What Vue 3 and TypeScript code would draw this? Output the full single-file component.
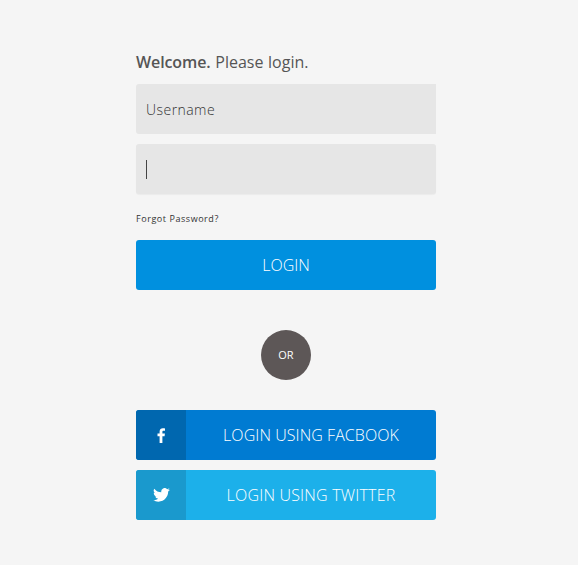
<script setup lang="ts">
const title = 'Please login.'
</script>

<template>
  <div class="page">
    <form class="form" @submit.prevent>
      <h1 class="title"><b>Welcome.</b> <span>Please</span> <em>login.</em></h1>
      <div class="field"><span class="placeholder">Username</span></div>
      <div class="field second"><span class="caret"></span></div>
      <a class="forgot">Forgot Password?</a>
      <button class="btn login" type="submit">LOGIN</button>
      <div class="or">OR</div>
      <button class="btn social fb" type="button">
        <span class="ico">
          <svg width="9" height="15" viewBox="0 0 9 15"><path fill="#fff" d="M2.6 15V8.2H.5V5.6h2.1V3.700C2.600 1.400 3.900.3 5.900.3c.9 0 1.700.1 2.100.1v2.400H6.700c-1.100 0-1.300.5-1.300 1.300v1.500h2.500l-.3 2.600H5.400V15z"/></svg>
        </span>
        <span class="lbl">LOGIN USING FACBOOK</span>
      </button>
      <button class="btn social tw" type="button">
        <span class="ico">
          <svg width="17" height="14" viewBox="0 0 24 20"><path fill="#fff" d="M24 2.400a9.800 9.800 0 0 1-2.800.8A4.900 4.900 0 0 0 23.300.5a9.800 9.800 0 0 1-3.100 1.200 4.900 4.900 0 0 0-8.400 4.500A14 14 0 0 1 1.700.9a4.900 4.900 0 0 0 1.500 6.600 4.900 4.900 0 0 1-2.200-.6v.1a4.900 4.900 0 0 0 3.900 4.800 4.900 4.900 0 0 1-2.200.1 4.900 4.900 0 0 0 4.600 3.400A9.900 9.900 0 0 1 0 17.300 14 14 0 0 0 7.500 19.500c9.100 0 14-7.500 14-14v-.6A10 10 0 0 0 24 2.400z"/></svg>
        </span>
        <span class="lbl">LOGIN USING TWITTER</span>
      </button>
    </form>
  </div>
</template>

<style>
html, body { margin: 0; background: #f5f5f5; }
</style>

<style scoped>
.page {
  min-height: 565px;
  box-sizing: border-box;
  padding: 51px 0 0 136px;
  background: #f5f5f5;
  font-family: "Open Sans", sans-serif;
}
.form { width: 300px; display: flex; flex-direction: column; }
.title {
  margin: 0 0 11px;
  font-size: 16px;
  line-height: 22px;
  font-weight: 400;
  color: #555;
  white-space: nowrap;
  word-spacing: .5px;
}
.title b { font-weight: 600; letter-spacing: -.1px; }
.title em { font-style: normal; font-weight: 400; }
.field {
  height: 50px;
  background: #e6e6e6;
  border-radius: 3px 0 0 3px;
  display: flex;
  align-items: center;
  padding-left: 10px;
  box-sizing: border-box;
}
.second {
  margin-top: 10px;
  border-radius: 3px;
  box-shadow: 0 1px 1px rgba(0,0,0,.04);
}
.placeholder { font-size: 14px; font-weight: 300; color: #333; letter-spacing: .45px; }
.caret { width: 1px; height: 19px; background: #444; }
.forgot {
  margin-top: 18px;
  font-size: 9px;
  line-height: 13px;
  color: #333;
  letter-spacing: .55px;
}
.btn {
  border: 0;
  padding: 0;
  width: 300px;
  height: 50px;
  border-radius: 3px;
  color: #fff;
  font-family: inherit;
  font-size: 16px;
  font-weight: 300;
  font-kerning: none;
  display: block;
}
.login { margin-top: 15px; background: #0090df; }
.or {
  width: 50px;
  height: 50px;
  margin: 40px auto 30px;
  padding-bottom: 2px;
  box-sizing: border-box;
  border-radius: 50%;
  background: #5d5757;
  color: #fff;
  font-size: 11px;
  display: flex;
  align-items: center;
  justify-content: center;
}
.social { display: flex; align-items: stretch; overflow: hidden; }
.ico {
  width: 50px;
  flex: none;
  display: flex;
  align-items: center;
  justify-content: center;
}
.lbl {
  flex: 1;
  display: flex;
  align-items: center;
  justify-content: center;
}
.fb { background: #007bd2; }
.fb .lbl { letter-spacing: .06px; }
.fb .ico { background: #0067af; }
.tw { margin-top: 10px; background: #1cb0ea; }
.tw .lbl { letter-spacing: .2px; }
.tw .ico { background: #1a99cd; }
</style>
